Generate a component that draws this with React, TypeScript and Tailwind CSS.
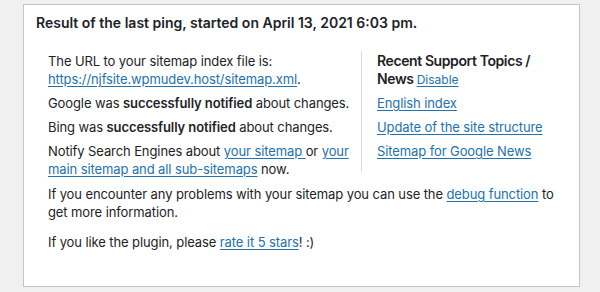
export default function App() {
  const link = 'text-[#2271b1] underline underline-offset-2'
  return (
    <div
      className="h-[292px] w-[600px] bg-[#f0f0f1] pt-[4px] pl-[23px] pr-[20px] text-[13px] leading-[18px] tracking-[-0.1px] text-[#1d2327]"
      style={{ fontFamily: 'Inter, "Noto Sans", sans-serif' }}
    >
      <div className="h-[283px] border border-[#c3c4c7] bg-white pt-[8px] pr-[20px]">
        <h2 className="pl-[12px] text-[14px] leading-[20px] font-semibold tracking-normal">
          Result of the last ping, started on April 13, 2021 6:03 pm.
        </h2>
        <div className="pl-[24px]">
          <div className="mt-[18px] flex items-start">
            <div className="flex-1 pt-[1px] pr-[10px]">
              <p className="mb-[6px]">
                The URL to your sitemap index file is:
                <br />
                <a className={link}>https://njfsite.wpmudev.host/sitemap.xml</a>.
              </p>
              <p className="mb-[6px]">
                Google was <b className="font-semibold">successfully notified</b> about changes.
              </p>
              <p className="mb-[6px]">
                Bing was <b className="font-semibold">successfully notified</b> about changes.
              </p>
              <p>
                Notify Search Engines about <a className={link}>your sitemap </a> or{' '}
                <a className={link}>your main sitemap and all sub-sitemaps</a> now.
              </p>
            </div>
            <div className="w-[198px] border-l border-[#dcdcde] pt-[1px] pb-[12px] pl-[15px]">
              <h3 className="mb-[5px] text-[14px] leading-[18px] font-semibold tracking-[-0.4px]">
                Recent Support Topics / News{' '}
                <a className="text-[12px] font-normal tracking-normal text-[#2271b1] underline underline-offset-2">
                  Disable
                </a>
              </h3>
              <ul>
                <li className="mb-[6px]">
                  <a className={link}>English index</a>
                </li>
                <li className="mb-[6px]">
                  <a className={link}>Update of the site structure</a>
                </li>
                <li>
                  <a className={link}>Sitemap for Google News</a>
                </li>
              </ul>
            </div>
          </div>
          <p className="mt-[7px]">
            If you encounter any problems with your sitemap you can use the{' '}
            <a className={link}>debug function</a> to get more information.
          </p>
          <p className="mt-[12px]">
            If you like the plugin, please <a className={link}>rate it 5 stars</a>! :)
          </p>
        </div>
      </div>
    </div>
  )
}
